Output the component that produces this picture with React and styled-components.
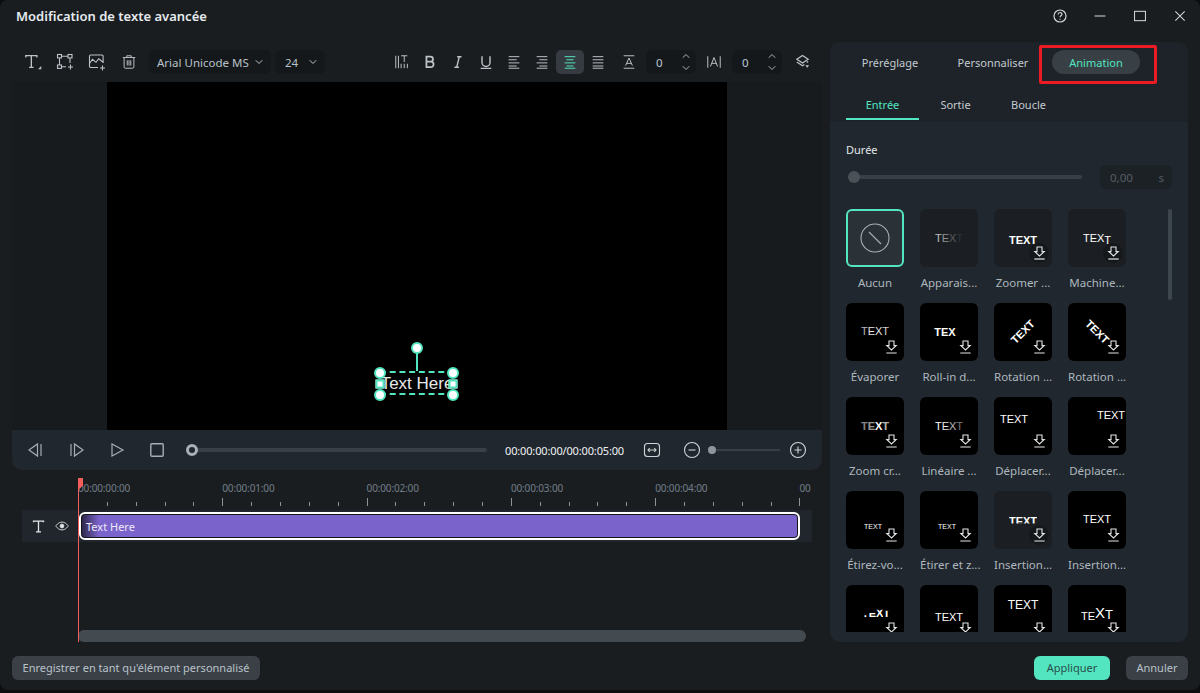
import React from 'react'
import styled, { createGlobalStyle } from 'styled-components'
import { ChevronDown, ChevronUp } from 'lucide-react'

const Global = createGlobalStyle`
  html, body { margin: 0; height: 100%; background: #0c0d0e; }
  body { font-family: "Noto Sans", "Open Sans", sans-serif; color: #c9d0d6; overflow: hidden; }
  * { box-sizing: border-box; }
`

const accent = '#52e5c0'

const Win = styled.div`
  width: 1200px;
  height: 690px;
  background: #1a1d20;
  border-radius: 8px;
  display: flex;
  flex-direction: column;
  overflow: hidden;
`
const TitleBar = styled.header`
  height: 42px;
  padding-left: 16px;
  display: flex;
  align-items: flex-start;
  justify-content: space-between;
`
const Title = styled.h1`
  margin: 6px 0 0;
  font-size: 13px;
  line-height: 20px;
  font-weight: 600;
  color: #e6ebef;
`
const WinButtons = styled.div`
  display: flex;
`
const WinButton = styled.div`
  width: 40px;
  height: 32px;
  display: flex;
  align-items: center;
  justify-content: center;
  color: #d5d8da;
`
const Body = styled.main`
  display: flex;
  gap: 8px;
  padding: 0 12px;
  height: 600px;
`
const Left = styled.section`
  width: 810px;
  display: flex;
  flex-direction: column;
  position: relative;
`
const Toolbar = styled.div`
  height: 40px;
  padding: 8px 0 8px 5px;
  display: flex;
  align-items: center;
`
const Tool = styled.div`
  width: ${p => p.$w || 32}px;
  height: 24px;
  flex: none;
  border-radius: 5px;
  display: flex;
  align-items: center;
  justify-content: center;
  color: ${p => (p.$active ? accent : '#bcc3c8')};
  background: ${p => (p.$active ? '#353b40' : 'transparent')};
`
const Select = styled.div`
  height: 24px;
  width: ${p => p.$w}px;
  margin-left: 4px;
  padding: 0 6px 0 ${p => p.$pl || 8}px;
  background: #15181b;
  border-radius: 6px;
  display: flex;
  align-items: center;
  justify-content: space-between;
  font-size: 11.5px;
  color: #b9c2ca;
  white-space: nowrap;
`
const RightTools = styled.div`
  margin-left: auto;
  display: flex;
  align-items: center;
`
const NumBox = styled.div`
  width: 50px;
  height: 24px;
  background: #15181b;
  border-radius: 6px;
  padding: 0 4px 0 10px;
  display: flex;
  align-items: center;
  justify-content: space-between;
  font-size: 11.5px;
  color: #b9c8d6;
`
const Spin = styled.div`
  display: flex;
  flex-direction: column;
  color: #a9b0b6;
`
const Preview = styled.div`
  height: 348px;
  background: #181b1e;
  display: flex;
  justify-content: center;
`
const Stage = styled.div`
  width: 620px;
  background: #000;
  position: relative;
`
const Selection = styled.div`
  position: absolute;
  left: 273px;
  top: 289px;
  width: 74px;
  height: 24px;
  padding-top: 1px;
  border-top: 2px dashed ${accent};
  border-bottom: 2px dashed ${accent};
  display: flex;
  align-items: center;
  justify-content: center;
  font-family: "Liberation Sans", Arial, sans-serif;
  font-size: 17px;
  white-space: nowrap;
  color: #e8e8e8;
`
const Stem = styled.div`
  position: absolute;
  left: 36px;
  top: -26px;
  width: 2px;
  height: 24px;
  background: ${accent};
`
const Handle = styled.div`
  position: absolute;
  width: ${p => (p.$square ? 9 : 12)}px;
  height: ${p => (p.$square ? 9 : 12)}px;
  left: ${p => p.$x}px;
  top: ${p => p.$y}px;
  transform: translate(-50%, -50%);
  background: #fff;
  border: 2px solid ${accent};
  border-radius: ${p => (p.$square ? 0 : '50%')};
`
const Player = styled.div`
  height: 40px;
  background: #20272e;
  border-radius: 0 0 10px 10px;
  display: flex;
  align-items: center;
  color: #a6adb3;
  padding-left: 3px;
`
const PlayBtn = styled.div`
  width: 40px;
  margin-left: ${p => p.$ml || 0}px;
  display: flex;
  justify-content: center;
`
const Track = styled.div`
  position: relative;
  height: ${p => p.$h}px;
  width: ${p => p.$w}px;
  margin-left: ${p => p.$ml || 0}px;
  background: #383f47;
  border-radius: 3px;
  flex: none;
`
const Thumb = styled.div`
  position: absolute;
  left: ${p => p.$x}px;
  top: 50%;
  width: ${p => p.$d}px;
  height: ${p => p.$d}px;
  transform: translate(-50%, -50%);
  border-radius: 50%;
  background: ${p => p.$bg || 'transparent'};
  border: ${p => (p.$ring ? `3px solid ${p.$ring}` : 'none')};
`
const TimeCode = styled.div`
  margin-left: 18px;
  width: 119px;
  font-size: 11px;
  letter-spacing: -0.15px;
  color: #f0f2f4;
  white-space: nowrap;
`
const ZoomIcon = styled.div`
  margin-left: ${p => p.$ml}px;
  display: flex;
  color: #d2d6d9;
`
const Timeline = styled.div`
  flex: 1;
  display: flex;
  flex-direction: column;
`
const Ruler = styled.div`
  margin: 8px 10px 0 66px;
  height: 32px;
  display: flex;
  overflow: hidden;
`
const RulerCell = styled.div`
  width: 144.3px;
  flex: none;
  display: flex;
  flex-direction: column;
  justify-content: space-between;
`
const RulerLabel = styled.span`
  font-size: 10px;
  line-height: 20px;
  letter-spacing: -0.15px;
  color: #727d88;
`
const Ticks = styled.div`
  display: flex;
  align-items: flex-end;
  height: 8px;
  margin-bottom: 5px;
`
const Tick = styled.i`
  display: block;
  width: 20%;
  height: ${p => (p.$major ? 8 : 4)}px;
  border-left: 1px solid #8d949a;
`
const TrackRow = styled.div`
  margin-left: 10px;
  margin-right: 10px;
  height: 32px;
  background: #20262c;
  display: flex;
  align-items: center;
`
const TrackIcons = styled.div`
  width: 57px;
  padding-left: 9px;
  display: flex;
  align-items: center;
  gap: 9px;
  color: #e3e6e8;
`
const Clip = styled.div`
  width: 721px;
  height: 28px;
  border: 2px solid #fff;
  border-radius: 6px;
  background: linear-gradient(90deg, #2a2542 0, #7a63cb 18px);
  box-shadow: inset 0 0 0 1px #14161a;
  padding-left: 5px;
  font-size: 11px;
  line-height: 25px;
  color: #eee9fa;
`
const HScroll = styled.div`
  margin: auto 16px 0 66px;
  height: 12px;
  background: #434a50;
  border-radius: 6px;
`
const Playhead = styled.div`
  position: absolute;
  left: 66px;
  top: 436px;
  bottom: 0;
  width: 1px;
  background: #f25d5d;
  &::before {
    content: '';
    position: absolute;
    left: 0;
    top: 0;
    width: 5px;
    height: 12px;
    background: #f25d5d;
    clip-path: polygon(0 0, 100% 0, 100% 65%, 0 100%);
  }
`
const Panel = styled.aside`
  width: 358px;
  background: #20272e;
  border-radius: 10px;
  position: relative;
  overflow: hidden;
  display: flex;
  flex-direction: column;
`
const PanelHead = styled.div`
  height: 80px;
  background: #1e2329;
  padding: 8px 16px 0;
`
const Tabs = styled.div`
  display: flex;
  gap: 15px;
`
const TabBtn = styled.div`
  width: 88px;
  height: 24px;
  border-radius: 12px;
  text-align: center;
  font-size: 11px;
  line-height: 25px;
  white-space: nowrap;
  color: ${p => (p.$active ? accent : '#c3cad0')};
  background: ${p => (p.$active ? '#383f45' : 'transparent')};
`
const RedBox = styled.div`
  position: absolute;
  left: 209px;
  top: 3px;
  width: 118px;
  height: 39px;
  border: 3px solid #ed1c24;
  border-radius: 2px;
`
const SubTabs = styled.div`
  display: flex;
  margin-top: 22px;
`
const SubTab = styled.div`
  width: 73px;
  height: 24px;
  text-align: center;
  font-size: 11px;
  line-height: 18px;
  color: ${p => (p.$active ? accent : '#c3cad0')};
  border-bottom: 2px solid ${p => (p.$active ? accent : 'transparent')};
`
const Content = styled.div`
  flex: 1;
  padding: 18px 16px 10px;
  display: flex;
  flex-direction: column;
  min-height: 0;
`
const Label = styled.div`
  font-size: 11px;
  line-height: 20px;
  color: #e3e8ec;
`
const DurationRow = styled.div`
  margin-top: 5px;
  height: 24px;
  display: flex;
  align-items: center;
`
const DurationInput = styled.div`
  margin-left: 18px;
  width: 72px;
  height: 24px;
  border-radius: 6px;
  background: #1c2126;
  padding: 0 8px 0 10px;
  display: flex;
  align-items: center;
  justify-content: space-between;
  font-size: 11.5px;
  color: #565d63;
`
const Gallery = styled.div`
  margin-top: 20px;
  flex: 1;
  min-height: 0;
  display: flex;
  align-items: flex-start;
`
const Grid = styled.div`
  width: 280px;
  height: 100%;
  overflow: hidden;
  display: grid;
  grid-template-columns: repeat(4, 58px);
  grid-auto-rows: 82px;
  gap: 12px 16px;
`
const ScrollThumb = styled.div`
  margin-left: 42px;
  width: 4px;
  height: 91px;
  border-radius: 2px;
  background: #3e464d;
`
const Item = styled.div`
  width: 58px;
`
const Tile = styled.div`
  position: relative;
  width: 58px;
  height: 58px;
  border-radius: 6px;
  overflow: hidden;
  display: flex;
  align-items: center;
  justify-content: center;
  background: ${p => (p.$selected ? '#2a3137' : p.$dim ? '#1b1f23' : '#000')};
  border: ${p => (p.$selected ? `2px solid ${accent}` : 'none')};
  color: #aab0b5;
`
const TileText = styled.span`
  position: absolute;
  left: ${p => p.$x}px;
  top: ${p => p.$y}px;
  transform: translate(-50%, -50%) rotate(${p => p.$rot || 0}deg);
  font-family: "Liberation Sans", Arial, sans-serif;
  font-size: ${p => p.$size || 11}px;
  font-weight: ${p => (p.$bold ? 700 : 400)};
  line-height: 1;
  color: #fff;
  white-space: nowrap;
  clip-path: ${p => (p.$cut ? `inset(0 0 ${p.$cut}% 0)` : 'none')};
`
const Letter = styled.span`
  display: inline-block;
  opacity: ${p => p.$o ?? 1};
  font-size: ${p => (p.$size ? `${p.$size}px` : 'inherit')};
  transform: translateY(${p => p.$dy || 0}px);
  clip-path: ${p => (p.$top ? `inset(${p.$top}% 0 0 0)` : 'none')};
`
const Badge = styled.div`
  position: absolute;
  left: 35px;
  top: 34px;
  width: 20px;
  height: 20px;
  border-radius: 50%;
  display: flex;
  align-items: center;
  justify-content: center;
  background: ${p => (p.$on ? '#15181b' : 'transparent')};
  color: #e4e6e8;
`
const Caption = styled.div`
  margin-top: 8px;
  font-size: 11.5px;
  line-height: 16px;
  text-align: center;
  white-space: nowrap;
  color: #aeb7be;
`
const Footer = styled.footer`
  margin-top: 14px;
  padding: 0 12px;
  display: flex;
  align-items: center;
  gap: 16px;
`
const Btn = styled.div`
  height: 24px;
  width: ${p => p.$w}px;
  border-radius: 6px;
  font-size: 11px;
  line-height: 24px;
  text-align: center;
  white-space: nowrap;
  color: ${p => (p.$primary ? '#2b4f4b' : '#b9c2c9')};
  background: ${p => (p.$primary ? accent : '#3a4046')};
  &:first-child {
    margin-right: auto;
  }
`

const Svg = ({ s = 18, w = 1.3, children }) => (
  <svg width={s} height={s} viewBox='0 0 18 18' fill='none' stroke='currentColor' strokeWidth={w}>
    {children}
  </svg>
)

const Download = () => (
  <svg width='13' height='14' viewBox='0 0 13 14' fill='none' stroke='currentColor' strokeWidth='1.1'>
    <path d='M4 1h5v4.6h2.2L6.5 10 1.8 5.6H4z' />
    <path d='M1.3 13h10.4' strokeWidth='1.2' />
  </svg>
)

// captions of the last row lie below the fold of the list
const tiles = [
  { label: 'Aucun', selected: true },
  { label: 'Apparais...', dim: true, x: 29, y: 29, fade: [0.7, 0.5, 0.25, 0.08] },
  { label: 'Zoomer ...', dim: true, hover: true, dl: true, x: 29, y: 31, bold: true },
  { label: 'Machine...', dim: true, hover: true, dl: true, x: 29, y: 29, letters: [{}, {}, {}, { dy: 2 }] },
  { label: 'Évaporer', dl: true, x: 29, y: 28, fade: [0.7, 0.9, 0.9, 0.8] },
  { label: 'Roll-in d...', dl: true, x: 25, y: 29, bold: true, text: 'TEX' },
  { label: 'Rotation ...', dl: true, x: 29, y: 29, rot: -45, bold: true },
  { label: 'Rotation ...', dl: true, x: 29, y: 29, rot: 45, bold: true },
  { label: 'Zoom cr...', dl: true, x: 29, y: 29, bold: true, fade: [0.5, 0.6, 1, 0.7] },
  { label: 'Linéaire ...', dl: true, x: 29, y: 29, fade: [1, 0.9, 0.7, 0.45] },
  { label: 'Déplacer...', dl: true, x: 20, y: 22 },
  { label: 'Déplacer...', dl: true, x: 43, y: 18 },
  { label: 'Étirez-vo...', dl: true, x: 27, y: 35, size: 7 },
  { label: 'Étirer et z...', dl: true, x: 27, y: 35, size: 7 },
  { label: 'Insertion...', dim: true, hover: true, dl: true, x: 29, y: 30, bold: true, cut: 28 },
  { label: 'Insertion...', dl: true, x: 29, y: 28 },
  { dl: true, x: 30, y: 28, bold: true, letters: [{ top: 70 }, { top: 50 }, { top: 20 }, { top: 30 }] },
  { dl: true, x: 29, y: 32 },
  { dl: true, x: 29, y: 20, size: 12 },
  { dl: true, x: 29, y: 28, letters: [{ size: 11, dy: 1 }, { size: 11, dy: 1 }, { size: 15, dy: -1 }, { size: 13 }] }
]

const TileArt = ({ t }) => {
  const text = t.text || 'TEXT'
  return (
    <TileText $x={t.x} $y={t.y} $rot={t.rot} $size={t.size} $bold={t.bold} $cut={t.cut}>
      {text.split('').map((c, i) => {
        const l = (t.letters && t.letters[i]) || {}
        return (
          <Letter key={i} $o={t.fade && t.fade[i]} $size={l.size} $dy={l.dy} $top={l.top}>
            {c}
          </Letter>
        )
      })}
    </TileText>
  )
}

const rulerLabels = ['00:00:00:00', '00:00:01:00', '00:00:02:00', '00:00:03:00', '00:00:04:00', '00']

const App = () => (
  <Win>
    <Global />
    <TitleBar>
      <Title>Modification de texte avancée</Title>
      <WinButtons>
        <WinButton>
          <Svg s={16}>
            <circle cx='9' cy='9' r='6.8' />
            <path d='M6.9 7.2c0-2.8 4.3-2.8 4.3-.1 0 1.7-2.2 1.7-2.2 3.4' />
            <path d='M9 12v1.3' />
          </Svg>
        </WinButton>
        <WinButton>
          <Svg s={14}><path d='M2 9h14' /></Svg>
        </WinButton>
        <WinButton>
          <Svg s={14}><rect x='2' y='3' width='14' height='12' /></Svg>
        </WinButton>
        <WinButton>
          <Svg s={14}><path d='M3 3l12 12M15 3L3 15' /></Svg>
        </WinButton>
      </WinButtons>
    </TitleBar>

    <Body>
      <Left>
        <Toolbar>
          <Tool>
            <Svg s={20} w={1.2}>
              <path d='M2.5 5V3.2h10V5M7.5 3.2v10.6M5.5 13.8h4' />
              <path d='M16.5 12.5v3h-3z' fill='currentColor' stroke='none' />
            </Svg>
          </Tool>
          <Tool>
            <Svg s={18} w={1.1}>
              <rect x='1.5' y='1.5' width='4' height='3.4' />
              <rect x='12' y='1.5' width='4' height='3.4' />
              <rect x='1.5' y='12' width='4' height='3.4' />
              <path d='M5.5 3.2H12M3.5 5v7M14 5v5M5.5 13.7H10M12 14h5M14.5 11.5v5' />
            </Svg>
          </Tool>
          <Tool>
            <Svg s={18} w={1.1}>
              <path d='M10 14.5H2.8a1.3 1.3 0 0 1-1.3-1.3V3.3A1.3 1.3 0 0 1 2.8 2h11a1.3 1.3 0 0 1 1.3 1.3V10' />
              <path d='M1.5 10.5l3-4.2 3.5 3 2.7-3.6 4.4 3.6' />
              <path d='M12 15h5M14.5 12.5v5' />
            </Svg>
          </Tool>
          <Tool>
            <Svg s={16} w={1.1}>
              <path d='M2 4h14M6.5 4V2h5v2M3.5 4v10.5a1.5 1.5 0 0 0 1.5 1.5h8a1.5 1.5 0 0 0 1.5-1.5V4M7 7v6M9 7v6M11 7v6' />
            </Svg>
          </Tool>
          <Select $w={122}>
            Arial Unicode MS
            <ChevronDown size={12} />
          </Select>
          <Select $w={50} $pl={10}>
            24
            <ChevronDown size={12} />
          </Select>
          <RightTools>
            <Tool $w={28}>
              <Svg s={16} w={1.1}>
                <path d='M2 2v14M5 2v14M8 2h7M11.5 2v7M8 11v5M11.5 11v5M15 11v5' />
              </Svg>
            </Tool>
            <Tool $w={28}>
              <Svg s={16} w={2}>
                <path d='M5 3h4.5a2.7 2.7 0 0 1 0 5.7H5zM5 8.7h5a3 3 0 0 1 0 6H5z' />
              </Svg>
            </Tool>
            <Tool $w={28}>
              <Svg s={16} w={1.6}>
                <path d='M10.5 3L7.5 15M8 3h5M5 15h5' />
              </Svg>
            </Tool>
            <Tool $w={28}>
              <Svg s={16} w={1.6}>
                <path d='M4.5 2.5v7a4.5 4.5 0 0 0 9 0v-7M3 16.2h12' />
              </Svg>
            </Tool>
            {['M3 3h12M3 6.5h9M3 10h12M3 13.5h9M3 16h12', 'M3 3h12M6 6.5h9M3 10h12M6 13.5h9M3 16h12', 'M3 3h12M5 6.5h8M3 10h12M5 13.5h8M3 16h12', 'M3 3h12M3 6.5h12M3 10h12M3 13.5h12M3 16h12'].map((d, i) => (
              <Tool key={i} $w={28} $active={i === 2}>
                <Svg s={16} w={1.1}><path d={d} /></Svg>
              </Tool>
            ))}
            <Tool $w={34}>
              <Svg s={16} w={1.1}>
                <path d='M3 2h12M3 16h12M5.2 13L9 4.5l3.8 8.5M6.5 10.5h5' />
              </Svg>
            </Tool>
            <NumBox>
              0
              <Spin>
                <ChevronUp size={12} />
                <ChevronDown size={12} />
              </Spin>
            </NumBox>
            <Tool $w={36}>
              <Svg s={16} w={1.1}>
                <path d='M2 2.5v13M16 2.5v13M5 14L9 4l4 10M6.5 10.5h5' />
              </Svg>
            </Tool>
            <NumBox>
              0
              <Spin>
                <ChevronUp size={12} />
                <ChevronDown size={12} />
              </Spin>
            </NumBox>
            <Tool $w={40}>
              <Svg s={17} w={1.3}>
                <path d='M9 1.5l6 4-6 4-6-4zM3 8.5l6 4 2-1.3M15 8l-1.5 1' />
                <path d='M12 12h4l-2 2.5z' fill='currentColor' stroke='none' />
              </Svg>
            </Tool>
          </RightTools>
        </Toolbar>

        <Preview>
          <Stage>
            <Selection>
              Text Here
              <Stem />
              <Handle $x={37} $y={-25} />
              <Handle $x={0} $y={0} />
              <Handle $x={73} $y={0} />
              <Handle $x={0} $y={22} />
              <Handle $x={73} $y={22} />
              <Handle $square $x={0} $y={11} />
              <Handle $square $x={73} $y={11} />
            </Selection>
          </Stage>
        </Preview>

        <Player>
          <PlayBtn>
            <Svg s={18} w={1.2}><path d='M11.5 3v12L3 9zM15 3v12' /></Svg>
          </PlayBtn>
          <PlayBtn $ml={2}>
            <Svg s={18} w={1.2}><path d='M6.5 3v12L15 9zM3 3v12' /></Svg>
          </PlayBtn>
          <PlayBtn>
            <Svg s={18} w={1.2}><path d='M4 3v12l11-6z' /></Svg>
          </PlayBtn>
          <PlayBtn>
            <Svg s={18} w={1.4}><rect x='2.8' y='2.8' width='12.4' height='12.4' rx='1' /></Svg>
          </PlayBtn>
          <Track $h={4} $w={297} $ml={13}>
            <Thumb $x={2} $d={12} $bg='#20272e' $ring='#a9b0b6' />
          </Track>
          <TimeCode>00:00:00:00/00:00:05:00</TimeCode>
          <ZoomIcon $ml={19}>
            <Svg s={18} w={1.1}>
              <rect x='1.5' y='2.5' width='15' height='13' rx='3' />
              <path d='M5 9h8M6.8 7L5 9l1.8 2M11.2 7L13 9l-1.8 2' />
            </Svg>
          </ZoomIcon>
          <ZoomIcon $ml={22}>
            <Svg s={18} w={1.1}><circle cx='9' cy='9' r='7.5' /><path d='M5.5 9h7' /></Svg>
          </ZoomIcon>
          <Track $h={2} $w={72} $ml={7}>
            <Thumb $x={4} $d={8} $bg='#8f969b' />
          </Track>
          <ZoomIcon $ml={9}>
            <Svg s={18} w={1.1}><circle cx='9' cy='9' r='7.5' /><path d='M5.5 9h7M9 5.5v7' /></Svg>
          </ZoomIcon>
        </Player>

        <Timeline>
          <Ruler>
            {rulerLabels.map(l => (
              <RulerCell key={l}>
                <RulerLabel>{l}</RulerLabel>
                <Ticks>
                  {[0, 1, 2, 3, 4].map(i => <Tick key={i} $major={i === 0} />)}
                </Ticks>
              </RulerCell>
            ))}
          </Ruler>
          <TrackRow>
            <TrackIcons>
              <Svg s={15} w={1.6}><path d='M3 4V2.5h12V4M9 2.5v13M6 15.5h6' /></Svg>
              <Svg s={14} w={1.2}>
                <path d='M1 9s3-5 8-5 8 5 8 5-3 5-8 5-8-5-8-5z' />
                <circle cx='9' cy='9' r='2.4' fill='currentColor' />
              </Svg>
            </TrackIcons>
            <Clip>Text Here</Clip>
          </TrackRow>
          <HScroll />
        </Timeline>
        <Playhead />
      </Left>

      <Panel>
        <PanelHead>
          <Tabs>
            <TabBtn>Préréglage</TabBtn>
            <TabBtn>Personnaliser</TabBtn>
            <TabBtn $active>Animation</TabBtn>
          </Tabs>
          <SubTabs>
            <SubTab $active>Entrée</SubTab>
            <SubTab>Sortie</SubTab>
            <SubTab>Boucle</SubTab>
          </SubTabs>
        </PanelHead>
        <RedBox />
        <Content>
          <Label>Durée</Label>
          <DurationRow>
            <Track $h={4} $w={234} $ml={2}>
              <Thumb $x={6} $d={12} $bg='#4a5157' />
            </Track>
            <DurationInput>
              0,00
              <span>s</span>
            </DurationInput>
          </DurationRow>
          <Gallery>
            <Grid>
              {tiles.map((t, i) => (
                <Item key={i}>
                  <Tile $selected={t.selected} $dim={t.dim}>
                    {t.selected ? (
                      <svg width='30' height='30' viewBox='0 0 30 30' fill='none' stroke='currentColor' strokeWidth='1.1'>
                        <circle cx='15' cy='15' r='14' />
                        <path d='M9 9l12 12' />
                      </svg>
                    ) : (
                      <TileArt t={t} />
                    )}
                    {t.dl && (
                      <Badge $on={t.hover}>
                        <Download />
                      </Badge>
                    )}
                  </Tile>
                  {t.label && <Caption>{t.label}</Caption>}
                </Item>
              ))}
            </Grid>
            <ScrollThumb />
          </Gallery>
        </Content>
      </Panel>
    </Body>

    <Footer>
      <Btn $w={248}>Enregistrer en tant qu'élément personnalisé</Btn>
      <Btn $primary $w={76}>Appliquer</Btn>
      <Btn $w={62}>Annuler</Btn>
    </Footer>
  </Win>
)

export default App
